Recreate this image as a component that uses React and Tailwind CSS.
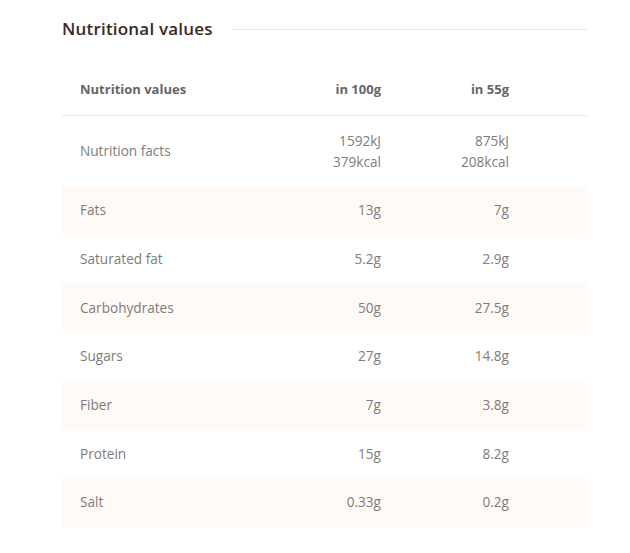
const rows = [
  { label: "Fats", a: "13g", b: "7g" },
  { label: "Saturated fat", a: "5.2g", b: "2.9g" },
  { label: "Carbohydrates", a: "50g", b: "27.5g" },
  { label: "Sugars", a: "27g", b: "14.8g" },
  { label: "Fiber", a: "7g", b: "3.8g" },
  { label: "Protein", a: "15g", b: "8.2g" },
  { label: "Salt", a: "0.33g", b: "0.2g" },
];

export default function App() {
  return (
    <div className="w-[630px] h-[553px] bg-white pl-[62px] pr-[43px] pt-[17px]" style={{ fontFamily: '"Open Sans", "Noto Sans", sans-serif' }}>
      <div className="flex items-center gap-5 h-6">
        <h2 className="text-[17px] font-semibold text-[#3b2824] tracking-[0.2px] whitespace-nowrap">Nutritional values</h2>
        <div className="flex-1 h-px bg-[#f3e2d2]" />
      </div>

      <div className="mt-[24px] text-[13.6px] text-[#7c7c7c]">
        <div className="grid grid-cols-[1fr_100px_128px] pl-[18px] pr-[78px] h-[51px] items-center border-b border-[#f2e6dc] text-[13px] font-bold text-[#666]">
          <div>Nutrition values</div>
          <div className="text-right">in 100g</div>
          <div className="text-right">in 55g</div>
        </div>
        <div className="grid grid-cols-[1fr_100px_128px] pl-[18px] pr-[78px] h-[70px] items-center">
          <div>Nutrition facts</div>
          <div className="text-right leading-[21px]">1592kJ<br />379kcal</div>
          <div className="text-right leading-[21px]">875kJ<br />208kcal</div>
        </div>
        {rows.map((r, i) => (
          <div
            key={r.label}
            className={`grid grid-cols-[1fr_100px_128px] pl-[18px] pr-[78px] h-[48.7px] items-center ${i % 2 === 0 ? "bg-[#fffaf5]" : ""}`}
          >
            <div>{r.label}</div>
            <div className="text-right">{r.a}</div>
            <div className="text-right">{r.b}</div>
          </div>
        ))}
      </div>
    </div>
  );
}
